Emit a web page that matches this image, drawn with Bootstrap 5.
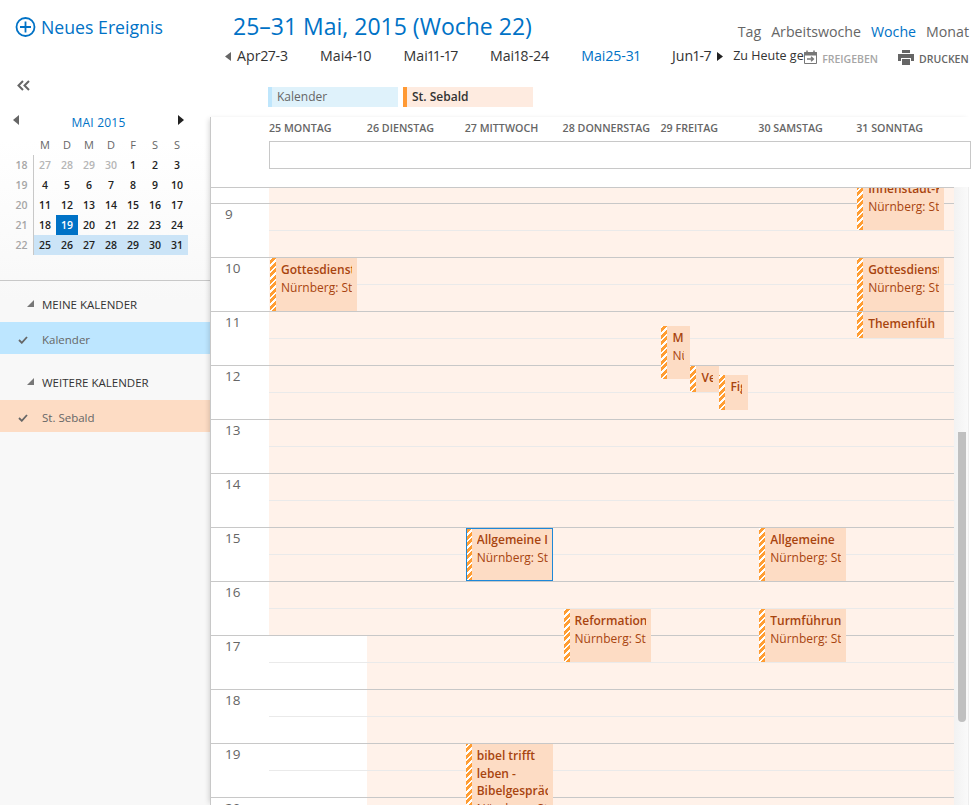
<!DOCTYPE html>
<html lang="de">
<head>
    <meta charset="UTF-8">
    <title>Kalender</title>
    <link href="https://cdn.jsdelivr.net/npm/bootstrap@5.3.0/dist/css/bootstrap.min.css" rel="stylesheet">
    <style>
        html, body { height: 805px; overflow: hidden; }
        body { font-family: "Open Sans", "Noto Sans", sans-serif; color: #666; background: #fff; }

        /* sidebar */
        .side-pane { width: 210px; flex: none; height: 805px; background: linear-gradient(#fff 0, #fff 140px, #f8f8f8 300px); }
        .new-event { padding: 15px 0 0 15px; height: 72px; color: #0072c6; font-size: 17.7px; line-height: 24px; gap: 5px; }
        .side-collapse { height: 33px; padding-left: 17px; }
        .mini-title { height: 20px; padding: 0 26px 0 13px; margin-top: 7px; color: #0072c6; font-size: 12px; line-height: 20px; letter-spacing: .2px; }
        .mini-title span { padding-top: 1px; }
        .mini-arrow { margin-top: 3px; }
        .mini-grid { display: grid; grid-template-columns: 23px repeat(7, 22px); grid-auto-rows: 20px; margin: 3px 0 0 11px; width: 177px; font-size: 10.5px; line-height: 20px; text-align: center; }
        .mini-dow { color: #666; font-size: 11px; }
        .mini-week { color: #a6a6a6; border-right: 1px solid #c8c8c8; font-weight: 600; padding-right: 1px; }
        .mini-day { color: #222; font-weight: 600; }
        .mini-off { color: #b5b5b5; }
        .mini-range { background: #cbe4f7; }
        .mini-today { background: #0072c6; color: #fff; }
        .side-rule { height: 1px; background: #c8c8c8; margin-top: 25px; }
        .side-head { padding: 15px 0 8px 27px; height: 41px; line-height: 18px; font-size: 11.5px; color: #333; gap: 8px; }
        .side-group + .side-group { margin-top: 5px; }
        .side-item { height: 32px; padding: 4px 0 0 18px; font-size: 11.5px; color: #666; gap: 14px; }
        .item-blue { background: #bde6ff; }
        .item-peach { background: #fddcc4; }

        /* header */
        .main-pane { width: 767px; flex: none; height: 805px; }
        .title-row { height: 43px; padding: 9px 8px 0 23px; }
        .week-title { color: #0072c6; font-size: 23px; line-height: 34px; }
        .view-switch { gap: 10px; font-size: 14.2px; padding-top: 12px; color: #666; }
        .is-current { color: #0072c6; }
        .week-row { height: 26px; padding-left: 15px; font-size: 14.2px; color: #333; }
        .week-row svg { flex: none; }
        .week-list { gap: 32px; margin: 0 6px; flex: none; font-variant-numeric: proportional-nums; }
        .today-link { width: 71px; margin-left: 10px; font-size: 12.5px; color: #333; flex: none; }
        .share-btn { font-size: 10.5px; font-weight: 600; gap: 5px; color: #a6a6a6; margin-top: 2px; flex: none; }
        .print-btn { font-size: 10.5px; font-weight: 600; gap: 5px; color: #666; margin: 2px 8px 0 20px; flex: none; }
        .btn-text { margin-top: 6px; }
        .chip-row { height: 48px; padding: 18px 0 0 58px; gap: 5px; }
        .cal-chip { width: 130px; height: 20px; padding-left: 5px; font-size: 12px; line-height: 20px; }
        .chip-own { background: #dff2fb; border-left: 4px solid #bfe6fc; color: #666; }
        .chip-other { background: #feebe0; border-left: 4px solid #ff9933; color: #333; font-weight: 600; }

        /* calendar panel */
        .cal-panel { width: 761px; height: 688px; border-left: 1px solid #c8c8c8; box-shadow: -3px 0 5px -2px rgba(0,0,0,.16); }
        .cal-head { height: 70px; flex: none; }
        .day-labels { padding: 3px 0 0 58px; height: 24px; width: 743px; }
        .day-label { flex: 1 1 0; min-width: 0; font-size: 10.7px; font-weight: 600; line-height: 16px; color: #666; }
        .allday-box { height: 28px; margin-left: 58px; border: 1px solid #c8c8c8; }
        .cal-scroll { width: 743px; flex: none; border-top: 1px solid #c8c8c8; }
        .cal-rows { margin-top: -39px; }
        .hour-row { height: 54px; border-top: 1px solid #c8c8c8; }
        .hour-label { width: 58px; flex: none; padding-left: 14px; font-size: 13.5px; line-height: 20px; color: #666; }
        .hour-cell { flex: 1 1 0; min-width: 0; }
        .hour-half { height: 27px; border-bottom: 1px solid #eaeaea; }
        .is-busy { background: #fff2ea; }
        .ev-layer { top: 0; bottom: 0; left: 58px; right: 0; }
        .cal-event { width: 87px; padding: 3px 0 0 11px; overflow: hidden; font-size: 12px; line-height: 18px; color: #a8440f;
            background: repeating-linear-gradient(-45deg, #ff9d33 0 2.9px, #fff 2.9px 4.6px) 0 0 / 6px 100% no-repeat, #fddcc4; }
        .cal-event.is-picked { box-shadow: inset 0 0 0 1px #1e88d8; }
        .ev-text { margin-right: 5px; overflow: hidden; height: 100%; }
        .is-narrow .ev-text { margin-right: 6px; }
        .ev-line { white-space: nowrap; overflow: hidden; }
        .ev-title { font-weight: 600; }
        .ev-wrap { white-space: normal; line-height: 17.5px; }
        .scroll-track { width: 15px; flex: none; background: linear-gradient(90deg, #f2f2f2, #fafafa); border-right: 1px solid #eee; }
        .scroll-thumb { width: 8px; height: 290px; margin: 245px 0 0 4px; background: #c0c0c0; border-radius: 0 0 4px 4px; }
    </style>
</head>
<body>

<div class="d-flex">
    <!-- Sidebar -->
    <aside class="side-pane">
        <div class="new-event d-flex align-items-start">
            <svg class="flex-shrink-0" width="21" height="24" viewBox="0 0 21 24" fill="none" stroke="#0072c6" stroke-width="1.8"><circle cx="10.5" cy="12" r="9"/><path d="M10.5 6.5v11M5 12h11"/></svg>
            <span class="text-nowrap">Neues Ereignis</span>
        </div>
        <div class="side-collapse">
            <svg width="13" height="11" viewBox="0 0 13 11" fill="none" stroke="#666" stroke-width="2"><path d="M6 1L1.5 5.5 6 10M12 1L7.5 5.5 12 10"/></svg>
        </div>
        <div class="mini-title d-flex align-items-start justify-content-between">
            <svg class="mini-arrow" width="6" height="10" viewBox="0 0 6 10"><path d="M6 0v10L0 5z" fill="#666"/></svg>
            <span>MAI 2015</span>
            <svg class="mini-arrow" width="6" height="10" viewBox="0 0 6 10"><path d="M0 0v10l6-5z" fill="#222"/></svg>
        </div>
        <div id="mini-month" class="mini-grid"></div>
        <div class="side-rule"></div>
        <div class="side-group">
            <div class="side-head d-flex align-items-start">
                <svg class="mt-1" width="7" height="7" viewBox="0 0 7 7"><path d="M7 0v7H0z" fill="#777"/></svg>
                <span>MEINE KALENDER</span>
            </div>
            <div class="side-item item-blue d-flex align-items-center">
                <svg width="10" height="8" viewBox="0 0 10 8" fill="none" stroke="#666" stroke-width="1.8"><path d="M1 4l2.8 2.8L9 1"/></svg>
                <span>Kalender</span>
            </div>
        </div>
        <div class="side-group">
            <div class="side-head d-flex align-items-start">
                <svg class="mt-1" width="7" height="7" viewBox="0 0 7 7"><path d="M7 0v7H0z" fill="#777"/></svg>
                <span>WEITERE KALENDER</span>
            </div>
            <div class="side-item item-peach d-flex align-items-center">
                <svg width="10" height="8" viewBox="0 0 10 8" fill="none" stroke="#666" stroke-width="1.8"><path d="M1 4l2.8 2.8L9 1"/></svg>
                <span>St. Sebald</span>
            </div>
        </div>
    </aside>

    <!-- Main -->
    <main class="main-pane d-flex flex-column">
        <div class="title-row d-flex justify-content-between">
            <div class="week-title text-nowrap">25–31 Mai, 2015 (Woche 22)</div>
            <div class="view-switch d-flex">
                <span>Tag</span><span>Arbeitswoche</span><span class="is-current">Woche</span><span>Monat</span>
            </div>
        </div>

        <div class="week-row d-flex align-items-center">
            <svg width="6" height="9" viewBox="0 0 6 9"><path d="M6 0v9L0 4.5z" fill="#666"/></svg>
            <div class="week-list d-flex text-nowrap">
                <span>Apr27-3</span><span>Mai4-10</span><span>Mai11-17</span><span>Mai18-24</span><span class="is-current">Mai25-31</span><span>Jun1-7</span>
            </div>
            <svg width="6" height="9" viewBox="0 0 6 9"><path d="M0 0v9l6-4.5z" fill="#222"/></svg>
            <div class="today-link text-nowrap overflow-hidden">Zu Heute gehen</div>
            <div class="share-btn d-flex align-items-center">
                <svg width="13" height="14" viewBox="0 0 13 14" fill="none" stroke="#777"><path d="M.5 2.5h12v11H.5z"/><path d="M.5 2.5h12v2.5H.5z" fill="#777"/><path d="M3 .5v2M10 .5v2" stroke-width="1.5"/><path d="M3 9h6M7 6.8L9.4 9 7 11.2" stroke-width="1.4"/></svg>
                <span class="btn-text">FREIGEBEN</span>
            </div>
            <div class="print-btn d-flex align-items-center">
                <svg width="16" height="15" viewBox="0 0 16 15" fill="#666"><path d="M4 0h8v3H4z"/><path d="M0 4h16v7h-3V8H3v3H0z"/><path d="M4 9h8v6H4z"/></svg>
                <span class="btn-text">DRUCKEN</span>
            </div>
        </div>

        <div class="chip-row d-flex">
            <div class="cal-chip chip-own">Kalender</div>
            <div class="cal-chip chip-other">St. Sebald</div>
        </div>

        <div class="cal-panel d-flex flex-column">
            <div class="cal-head">
                <div id="day-labels" class="day-labels d-flex text-nowrap"></div>
                <div class="allday-box"></div>
            </div>
            <div class="d-flex flex-grow-1 overflow-hidden">
                <div class="cal-scroll overflow-hidden">
                    <div id="cal-rows" class="cal-rows position-relative"></div>
                </div>
                <div class="scroll-track"><div class="scroll-thumb"></div></div>
            </div>
        </div>
    </main>
</div>

<script>
    const DAYS = ['25 MONTAG', '26 DIENSTAG', '27 MITTWOCH', '28 DONNERSTAG', '29 FREITAG', '30 SAMSTAG', '31 SONNTAG'];

    // col = Wochentag, top/height in Pixel ab 8:00, shift fuer ueberlappende Termine
    const EVENTS = [
        { col: 6, top: 28, height: 53, lines: ['Innenstadt-Führung', 'Nürnberg: St. Sebald'] },
        { col: 0, top: 109, height: 53, lines: ['Gottesdienst', 'Nürnberg: St. Sebald'] },
        { col: 6, top: 109, height: 53, lines: ['Gottesdienst', 'Nürnberg: St. Sebald'] },
        { col: 6, top: 163, height: 26, lines: ['Themenfüh'] },
        { col: 4, top: 177, height: 53, width: 29, lines: ['Musik', 'Nürnberg: St. Sebald'] },
        { col: 4, shift: 29, top: 217, height: 26, width: 29, lines: ['Vesper'] },
        { col: 4, shift: 58, top: 226, height: 35, width: 29, lines: ['Figuren'] },
        { col: 2, top: 379, height: 53, picked: true, lines: ['Allgemeine Information', 'Nürnberg: St. Sebald'] },
        { col: 5, top: 379, height: 53, lines: ['Allgemeine', 'Nürnberg: St. Sebald'] },
        { col: 3, top: 460, height: 53, lines: ['Reformationsgeschichte', 'Nürnberg: St. Sebald'] },
        { col: 5, top: 460, height: 53, lines: ['Turmführung', 'Nürnberg: St. Sebald'] },
        { col: 2, top: 595, height: 120, wrap: true, lines: ['bibel trifft leben - Bibelgespräch', 'Nürnberg: St. Sebald'] }
    ];

    function buildMiniMonth() {
        const grid = document.getElementById('mini-month');
        let html = '<div></div>';
        ['M', 'D', 'M', 'D', 'F', 'S', 'S'].forEach(d => { html += `<div class="mini-dow">${d}</div>`; });

        for (let w = 0; w < 5; w++) {
            html += `<div class="mini-week">${18 + w}</div>`;
            for (let d = 0; d < 7; d++) {
                const date = new Date(2015, 3, 27 + w * 7 + d);
                let cls = 'mini-day';
                if (date.getMonth() === 3) cls += ' mini-off';
                if (w === 4) cls += ' mini-range';
                if (date.getMonth() === 4 && date.getDate() === 19) cls += ' mini-today';
                html += `<div class="${cls}">${date.getDate()}</div>`;
            }
        }
        grid.innerHTML = html;
    }

    function buildGrid() {
        document.getElementById('day-labels').innerHTML =
            DAYS.map(d => `<div class="day-label">${d}</div>`).join('');

        const rows = document.getElementById('cal-rows');
        let html = '';
        for (let h = 8; h <= 20; h++) {
            html += `<div class="hour-row d-flex"><div class="hour-label">${h > 8 ? h : ''}</div>`;
            for (let c = 0; c < 7; c++) {
                const busy = c > 0 || h < 17;
                html += `<div class="hour-cell${busy ? ' is-busy' : ''}"><div class="hour-half"></div></div>`;
            }
            html += '</div>';
        }

        html += '<div class="ev-layer position-absolute">';
        EVENTS.forEach(ev => {
            const left = `calc(${ev.col} * 100% / 7 + ${1 + (ev.shift || 0)}px)`;
            const width = ev.width ? `width:${ev.width}px;` : '';
            const lines = ev.lines.map((t, i) =>
                `<div class="ev-line${i === 0 ? ' ev-title' : ''}${ev.wrap && i === 0 ? ' ev-wrap' : ''}">${t}</div>`).join('');
            html += `<div class="cal-event position-absolute${ev.picked ? ' is-picked' : ''}${ev.width ? ' is-narrow' : ''}" style="left:${left};top:${ev.top}px;height:${ev.height}px;${width}"><div class="ev-text">${lines}</div></div>`;
        });
        html += '</div>';
        rows.innerHTML = html;
    }

    buildMiniMonth();
    buildGrid();
</script>

<script src="https://cdn.jsdelivr.net/npm/bootstrap@5.3.0/dist/js/bootstrap.bundle.min.js"></script>
</body>
</html>
